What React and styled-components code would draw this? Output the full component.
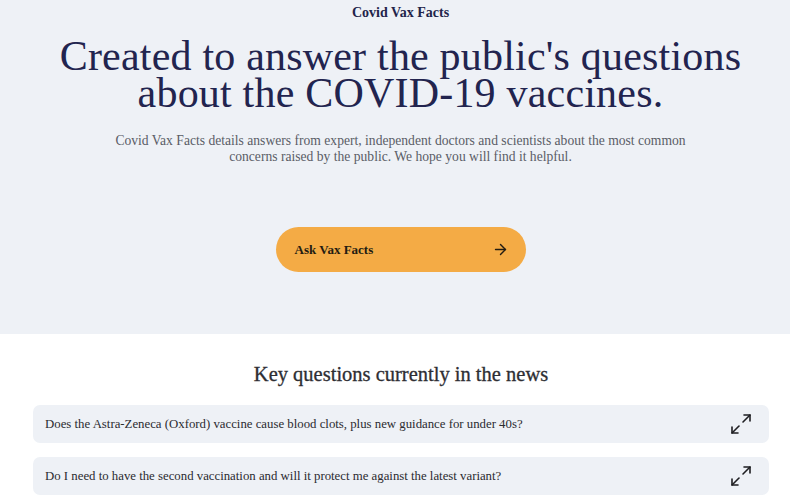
import styled, { createGlobalStyle } from 'styled-components';
import { ArrowRight, Maximize2 } from 'lucide-react';

const GlobalStyle = createGlobalStyle`
  body {
    margin: 0;
    background: #ffffff;
    font-family: 'Liberation Serif', 'DejaVu Serif', serif;
  }
`;

const questions = [
  'Does the Astra-Zeneca (Oxford) vaccine cause blood clots, plus new guidance for under 40s?',
  'Do I need to have the second vaccination and will it protect me against the latest variant?',
];

export default function App() {
  return (
    <>
      <GlobalStyle />
      <Hero>
        <Brand>Covid Vax Facts</Brand>
        <Headline>
          Created to answer the public's questions
          <br />
          about the COVID-19 vaccines.
        </Headline>
        <Intro>
          Covid Vax Facts details answers from expert, independent doctors and scientists about the most common
          <br />
          concerns raised by the public. We hope you will find it helpful.
        </Intro>
        <AskButton>
          Ask Vax Facts
          <ArrowRight size={17} strokeWidth={2} />
        </AskButton>
      </Hero>

      <News>
        <NewsTitle>Key questions currently in the news</NewsTitle>
        <QuestionList>
          {questions.map((q) => (
            <QuestionCard key={q}>
              <span>{q}</span>
              <Maximize2 size={24} strokeWidth={1.6} />
            </QuestionCard>
          ))}
        </QuestionList>
      </News>
    </>
  );
}

const Hero = styled.header`
  background: #eef1f6;
  height: 334px;
  box-sizing: border-box;
  padding: 4px 0 0 11px;
  display: flex;
  flex-direction: column;
  align-items: center;
`;

const Brand = styled.div`
  font-size: 14px;
  font-weight: bold;
  color: #22244a;
  line-height: 18px;
`;

const Headline = styled.h1`
  margin: 16px 0 0;
  font-size: 42px;
  font-weight: normal;
  line-height: 37px;
  color: #22244f;
  text-align: center;
  letter-spacing: 0.2px;
`;

const Intro = styled.p`
  margin: 21px 0 0;
  font-size: 13.6px;
  line-height: 16px;
  color: #5a5d66;
  text-align: center;
`;

const AskButton = styled.button`
  margin-top: 62px;
  width: 250px;
  height: 45px;
  border: none;
  border-radius: 23px;
  background: #f4ab45;
  color: #231c12;
  font-family: inherit;
  font-size: 13px;
  font-weight: bold;
  display: flex;
  align-items: center;
  justify-content: space-between;
  padding: 0 17px 0 19px;
  box-sizing: border-box;
  cursor: pointer;
`;

const News = styled.section`
  padding: 28px 21px 0 33px;
  display: flex;
  flex-direction: column;
  align-items: stretch;
`;

const NewsTitle = styled.h2`
  margin: 0;
  text-align: center;
  font-size: 20.5px;
  font-weight: normal;
  color: #2e2e33;
  line-height: 24px;
  -webkit-text-stroke: 0.3px #2e2e33;
`;

const QuestionList = styled.div`
  margin-top: 19px;
  display: flex;
  flex-direction: column;
  gap: 14px;
`;

const QuestionCard = styled.div`
  height: 38px;
  background: #eef1f6;
  border-radius: 7px;
  display: flex;
  align-items: center;
  justify-content: space-between;
  padding: 0 16px 0 12px;
  font-size: 12.8px;
  color: #2b2b30;

  svg {
    color: #1e1e22;
  }
`;
